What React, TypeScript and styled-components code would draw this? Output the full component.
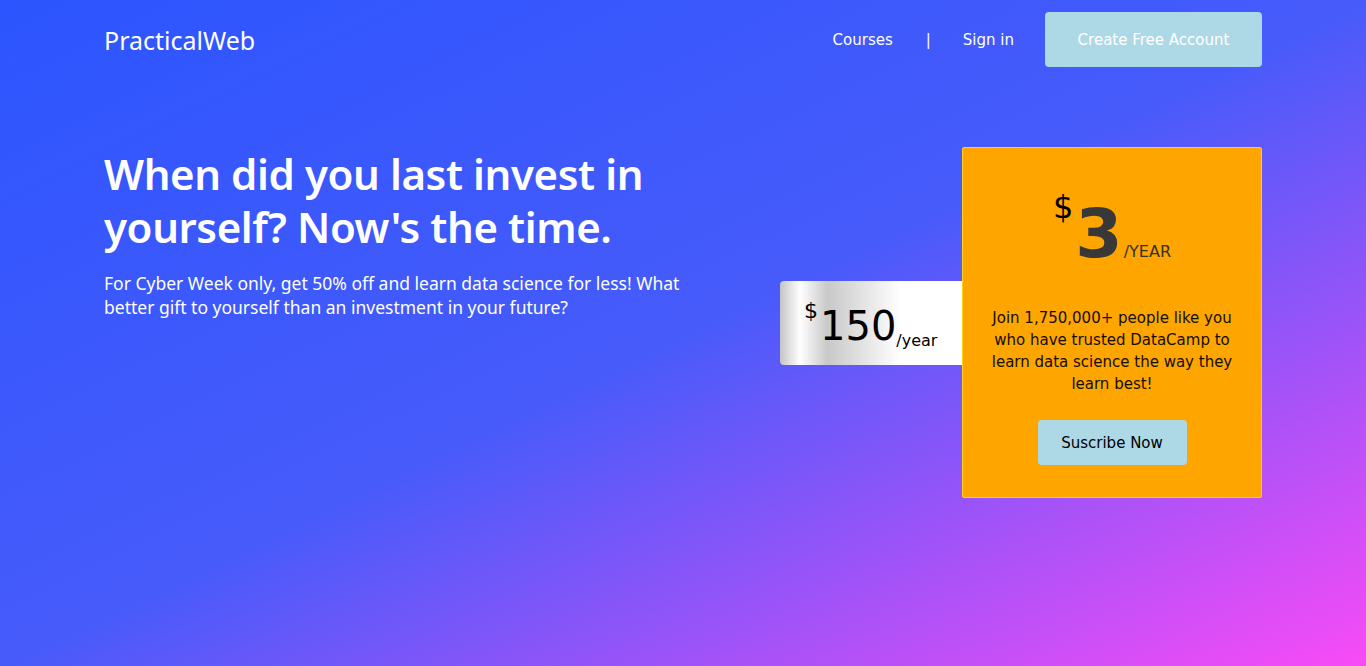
import React from "react";
import styled, { createGlobalStyle } from "styled-components";

const Global = createGlobalStyle`
  html, body { margin: 0; padding: 0; }
  body {
    font-family: "Noto Sans", "Open Sans", sans-serif;
    color: #fff;
  }
  * { box-sizing: border-box; }
`;

const Page = styled.div`
  width: 1366px;
  height: 666px;
  overflow: hidden;
  background: linear-gradient(to bottom right, #2c55ff 0%, #475bfa 50%, #f84bf6 100%);
`;

const Container = styled.div`
  width: 1158px;
  margin: 0 auto;
`;

const Nav = styled.nav`
  height: 79px;
  display: flex;
  align-items: center;
  justify-content: space-between;
`;

const Logo = styled.div`
  font-family: "Noto Sans", sans-serif;
  font-size: 25px;
  color: #fff;
`;

const NavLinks = styled.div`
  display: flex;
  align-items: center;
`;

const NavLink = styled.a`
  font-family: "DejaVu Sans", Verdana, sans-serif;
  font-size: 15px;
  color: #fff;
  text-decoration: none;
`;

const Divider = styled.span`
  font-family: "DejaVu Sans", Verdana, sans-serif;
  font-size: 15px;
  margin: 0 32px 0 33px;
`;

const CtaButton = styled.button`
  margin-left: 31px;
  width: 217px;
  height: 55px;
  border: none;
  border-radius: 4px;
  background: #add8e6;
  color: #fff;
  font-family: "DejaVu Sans", Verdana, sans-serif;
  font-size: 15px;
`;

const Hero = styled.section`
  display: flex;
  justify-content: space-between;
  margin-top: 68px;
`;

const Copy = styled.div`
  width: 600px;
`;

const Title = styled.h1`
  margin: 0;
  font-family: "Noto Sans", sans-serif;
  font-weight: 600;
  font-size: 42px;
  letter-spacing: -0.4px;
  line-height: 53px;
  color: #fff;
`;

const Lead = styled.p`
  margin: 18px 0 0;
  font-family: "Noto Sans", sans-serif;
  font-size: 17.5px;
  line-height: 24px;
  color: #fff;
`;

const Offer = styled.div`
  display: flex;
  align-items: center;
`;

const OldPrice = styled.div`
  width: 182px;
  height: 84px;
  border-radius: 4px 0 0 4px;
  background: linear-gradient(
    to right,
    #c4c4c4 0%,
    #ffffff 11%,
    #c9c9c9 26%,
    #e6e6e6 48%,
    #ffffff 66%,
    #ffffff 100%
  );
  padding: 19px 0 0 24px;
  color: #000;
  font-family: "DejaVu Sans", Verdana, sans-serif;
`;

const PriceLine = styled.div<{ $top: number; $align: string }>`
  display: flex;
  align-items: flex-start;
  justify-content: ${(p) => p.$align};
  margin-top: ${(p) => p.$top}px;
  white-space: nowrap;
`;

const Currency = styled.span<{ $size: number; $top: number }>`
  font-size: ${(p) => p.$size}px;
  line-height: 1;
  margin-top: ${(p) => p.$top}px;
`;

const OldAmount = styled.span`
  font-size: 40px;
  line-height: 1;
  margin: 6px 0 0 2px;
`;

const Per = styled.span<{ $color: string; $top: number }>`
  font-size: 16px;
  line-height: 1;
  color: ${(p) => p.$color};
  margin-top: ${(p) => p.$top}px;
`;

const Card = styled.div`
  width: 300px;
  height: 351px;
  background: #ffa500;
  border: 1px solid #ffd21a;
  border-radius: 2px;
  display: flex;
  flex-direction: column;
  align-items: center;
  padding: 0 24px;
  color: #000;
  font-family: "DejaVu Sans", Verdana, sans-serif;
`;

const NewAmount = styled.span`
  font-weight: 700;
  font-size: 68px;
  line-height: 1;
  color: #383838;
  margin: 9px 1px 0 2px;
`;

const Blurb = styled.p`
  margin: 39px 0 0;
  text-align: center;
  font-size: 15px;
  line-height: 22px;
  color: #140e00;
`;

const SubscribeButton = styled.button`
  margin-top: 25px;
  width: 149px;
  height: 45px;
  border: none;
  border-radius: 4px;
  background: #add8e6;
  color: #000;
  font-family: "DejaVu Sans", Verdana, sans-serif;
  font-size: 15px;
`;

export default function App() {
  return (
    <Page>
      <Global />
      <Container>
        <Nav>
          <Logo>PracticalWeb</Logo>
          <NavLinks>
            <NavLink href="#">Courses</NavLink>
            <Divider>|</Divider>
            <NavLink href="#">Sign in</NavLink>
            <CtaButton>Create Free Account</CtaButton>
          </NavLinks>
        </Nav>
        <Hero>
          <Copy>
            <Title>When did you last invest in yourself? Now's the time.</Title>
            <Lead>
              For Cyber Week only, get 50% off and learn data science for less! What better
              gift to yourself than an investment in your future?
            </Lead>
          </Copy>
          <Offer>
            <OldPrice>
              <PriceLine $top={0} $align="flex-start">
                <Currency $size={22} $top={0}>$</Currency>
                <OldAmount>150</OldAmount>
                <Per $color="#000" $top={33}>/year</Per>
              </PriceLine>
            </OldPrice>
            <Card>
              <PriceLine $top={43} $align="center">
                <Currency $size={32} $top={0}>$</Currency>
                <NewAmount>3</NewAmount>
                <Per $color="#333" $top={53}>/YEAR</Per>
              </PriceLine>
              <Blurb>
                Join 1,750,000+ people like you who have trusted DataCamp to learn data
                science the way they learn best!
              </Blurb>
              <SubscribeButton>Suscribe Now</SubscribeButton>
            </Card>
          </Offer>
        </Hero>
      </Container>
    </Page>
  );
}
